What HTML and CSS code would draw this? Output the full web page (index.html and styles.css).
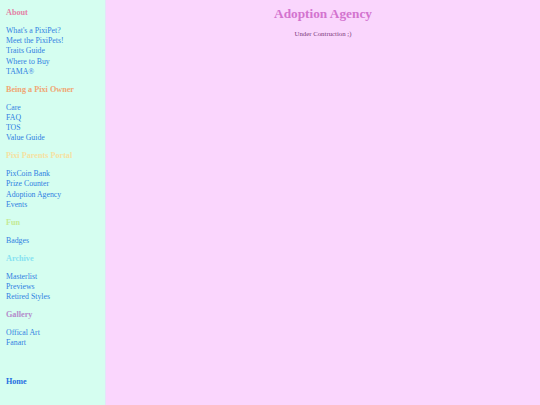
FILE: index.html
```html
<!DOCTYPE html>
<html>
<head>
<meta charset="utf-8">
<title>Adoption Agency</title>
<link rel="stylesheet" href="styles.css">
</head>
<body>
<div class="page">
  <nav class="sidebar">
    <div class="section">
      <div class="heading h-about">About</div>
      <a class="link" href="#">What's a PixiPet?</a>
      <a class="link" href="#">Meet the PixiPets!</a>
      <a class="link" href="#">Traits Guide</a>
      <a class="link" href="#">Where to Buy</a>
      <a class="link" href="#">TAMA®</a>
    </div>
    <div class="section">
      <div class="heading h-owner">Being a Pixi Owner</div>
      <a class="link" href="#">Care</a>
      <a class="link" href="#">FAQ</a>
      <a class="link" href="#">TOS</a>
      <a class="link" href="#">Value Guide</a>
    </div>
    <div class="section">
      <div class="heading h-portal">Pixi Parents Portal</div>
      <a class="link" href="#">PixCoin Bank</a>
      <a class="link" href="#">Prize Counter</a>
      <a class="link" href="#">Adoption Agency</a>
      <a class="link" href="#">Events</a>
    </div>
    <div class="section">
      <div class="heading h-fun">Fun</div>
      <a class="link" href="#">Badges</a>
    </div>
    <div class="section">
      <div class="heading h-archive">Archive</div>
      <a class="link" href="#">Masterlist</a>
      <a class="link" href="#">Previews</a>
      <a class="link" href="#">Retired Styles</a>
    </div>
    <div class="section">
      <div class="heading h-gallery">Gallery</div>
      <a class="link" href="#">Offical Art</a>
      <a class="link" href="#">Fanart</a>
    </div>
    <a class="home" href="#">Home</a>
  </nav>
  <main class="content">
    <h1 class="title">Adoption Agency</h1>
    <p class="subtitle">Under Contruction ;)</p>
  </main>
</div>
</body>
</html>
```

FILE: styles.css
```css
html, body {
  margin: 0;
  padding: 0;
  height: 100%;
}
body {
  font-family: "Liberation Serif", "Times New Roman", serif;
  background: #fad6fd;
}
.page {
  display: flex;
  min-height: 405px;
}
.sidebar {
  width: 106px;
  flex: none;
  background: #d5fef0;
  border-right: 1px solid #e4e4f8;
  padding: 7px 0 0 6px;
  box-sizing: border-box;
  display: flex;
  flex-direction: column;
}
.section {
  display: flex;
  flex-direction: column;
}
.heading {
  font-size: 8.2px;
  font-weight: bold;
  line-height: 12px;
  margin: 0 0 6.9px 0;
}
.section + .section .heading {
  margin-top: 6.9px;
}
.h-about { color: #e383a6; }
.h-owner { color: #f0a674; }
.h-portal { color: #f6e2a2; }
.h-fun { color: #c4ea94; }
.h-archive { color: #86e2f0; }
.h-gallery { color: #b48ccb; }
.link {
  font-size: 7.8px;
  line-height: 10.2px;
  color: #2f80e2;
  text-decoration: none;
  white-space: nowrap;
}
.home {
  margin-top: 27px;
  font-size: 8.1px;
  font-weight: bold;
  line-height: 12px;
  color: #1f6fe0;
  text-decoration: none;
}
.content {
  flex: 1;
  text-align: center;
}
.title {
  margin: 5px 0 0 0;
  font-size: 13.3px;
  line-height: 18px;
  font-weight: bold;
  color: #d373cf;
}
.subtitle {
  margin: 6px 0 0 0;
  font-size: 6.8px;
  line-height: 10px;
  color: #7a3a7a;
}
```
